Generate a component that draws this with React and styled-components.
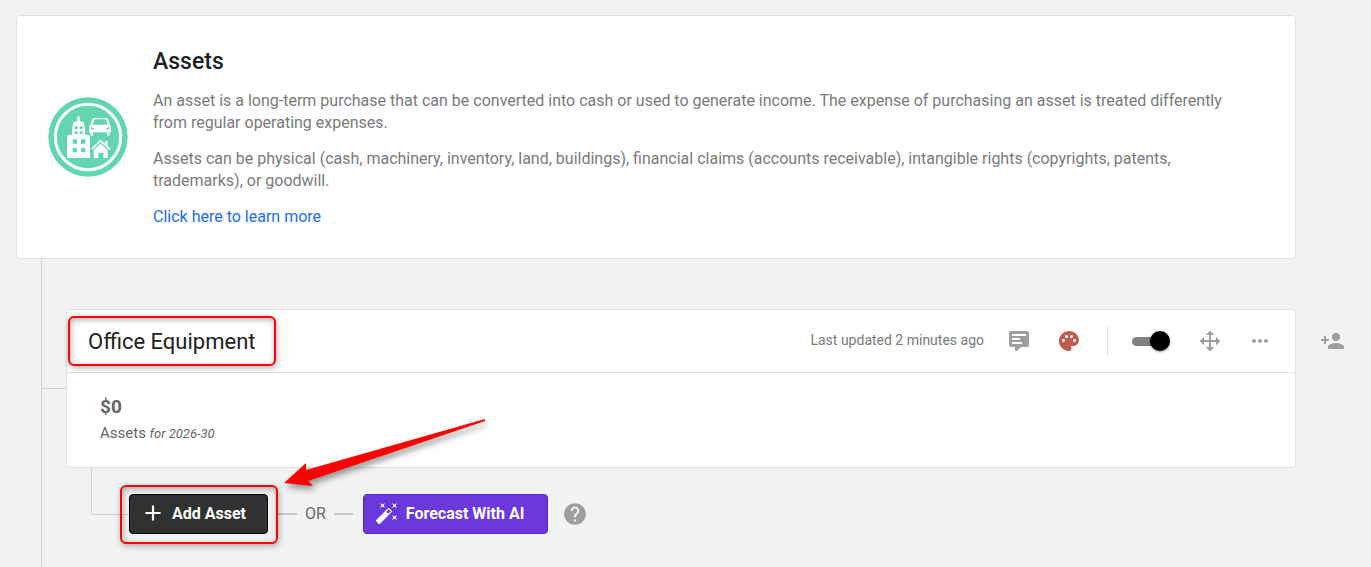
import styled, { createGlobalStyle } from "styled-components"
import { MdAdd, MdAutoFixHigh, MdHelp, MdMoreHoriz, MdPalette } from "react-icons/md"

const GlobalStyle = createGlobalStyle`
  :root {
    --page: #f1f3f2;
    --line: #d0d3d2;
    --border: #dfe1e0;
    --muted: #7a7a7a;
    --icon: #9e9e9e;
    --mark: #ff0000;
  }
  *, *::before, *::after {
    box-sizing: border-box;
  }
  body {
    margin: 0;
    background: var(--page);
    font-family: Roboto, "Liberation Sans", sans-serif;
    font-size: 16px;
    line-height: 22px;
    color: #212121;
  }
  h1, h2, p {
    margin: 0;
  }
`

const Page = styled.main`
  min-height: 100vh;
  display: flex;
  flex-direction: column;
  padding: 15px 0 0 16px;
`

const Card = styled.section`
  background: #fff;
  border: 1px solid var(--border);
  border-radius: 4px;
`

const IntroCard = styled(Card)`
  display: flex;
  align-items: center;
  gap: 25px;
  margin-right: 75px;
  padding: 32px 40px 30px 31px;
  svg {
    flex: none;
    margin-bottom: 2px;
  }
`

const IntroText = styled.div`
  display: flex;
  flex-direction: column;
  align-items: flex-start;
  gap: 14px;
  color: var(--muted);
  h1 {
    font-size: 23px;
    font-weight: 500;
    line-height: 28px;
    color: #212121;
  }
  a {
    color: #1a6fe8;
    text-decoration: none;
  }
`

const Tree = styled.div`
  flex: 1;
  margin-left: 25px;
  padding: 50px 0 30px;
  border-left: 1px solid var(--line);
`

const Branch = styled.div`
  display: flex;
`

const Stub = styled.span`
  flex: none;
  align-self: center;
  width: 24px;
  height: 1px;
  background: var(--line);
`

const CategoryCard = styled(Card)`
  flex: 1;
`

const CategoryHeader = styled.header`
  display: flex;
  align-items: center;
  justify-content: space-between;
  height: 63px;
  padding: 0 23px 0 21px;
  border-bottom: 1px solid var(--border);
  h2 {
    padding-top: 2px;
    font-size: 22px;
    font-weight: 400;
    line-height: 28px;
  }
`

const Marked = styled.div`
  position: relative;
  display: flex;
  &::after {
    content: "";
    position: absolute;
    inset: ${({ $inset }) => $inset};
    border: 2px solid var(--mark);
    border-radius: 6px;
    box-shadow: 1px 2px 6px rgba(0, 0, 0, 0.3), inset 1px 2px 6px rgba(0, 0, 0, 0.3);
    pointer-events: none;
  }
`

const HeaderSide = styled.div`
  display: flex;
  align-items: center;
  gap: 23px;
`

const Updated = styled.span`
  padding-bottom: 2px;
  font-size: 14px;
  color: var(--muted);
`

const Tools = styled.div`
  display: flex;
  align-items: center;
  gap: 26px;
`

const IconButton = styled.button`
  display: flex;
  align-items: center;
  height: 24px;
  padding: 0;
  border: 0;
  background: none;
  color: ${({ $color }) => $color || "var(--icon)"};
  cursor: pointer;
`

const Divider = styled.span`
  width: 1px;
  height: 30px;
  background: var(--border);
`

const Toggle = styled.input`
  appearance: none;
  position: relative;
  width: 38px;
  height: 20px;
  margin: 0 2px 0 -2px;
  cursor: pointer;
  &::before {
    content: "";
    position: absolute;
    inset: 6px 4px 5px 0;
    border-radius: 5px;
    background: #808080;
  }
  &::after {
    content: "";
    position: absolute;
    top: 0;
    left: 0;
    width: 20px;
    height: 20px;
    border-radius: 50%;
    background: #757575;
    box-shadow: 0 1px 3px rgba(0, 0, 0, 0.4);
  }
  &:checked::after {
    left: 18px;
    background: #000;
  }
`

const CategoryBody = styled.div`
  padding: 21px 33px;
  color: #666;
`

const Amount = styled.p`
  margin-bottom: 1px;
  font-size: 19px;
  font-weight: 700;
  line-height: 26px;
`

const Caption = styled.p`
  font-size: 15px;
  line-height: 24px;
  em {
    font-size: 13px;
  }
`

const Side = styled.div`
  flex: none;
  display: flex;
  align-items: flex-start;
  justify-content: center;
  width: 75px;
  padding: 20px 2px 0 0;
`

const Actions = styled.div`
  display: flex;
  margin-left: 49px;
`

const Elbow = styled.span`
  width: 38px;
  height: 47px;
  border: solid var(--line);
  border-width: 0 0 1px 1px;
`

const ActionRow = styled.div`
  display: flex;
  align-items: center;
  padding-top: 26px;
`

const Button = styled.button`
  display: flex;
  align-items: center;
  gap: 6px;
  height: 40px;
  padding: 0 21px 2px 10px;
  border: 1px solid #000;
  border-radius: 4px;
  background: #303231;
  color: #fff;
  font: 700 16px Roboto, "Liberation Sans", sans-serif;
  cursor: pointer;
`

const AiButton = styled(Button)`
  gap: 7px;
  padding: 0 23px 2px 11px;
  border-color: #5a22d0;
  background: #6b38db;
`

const Or = styled.div`
  display: flex;
  align-items: center;
  gap: 8px;
  margin: 0 10px;
  color: #666;
  &::before, &::after {
    content: "";
    width: 19px;
    height: 2px;
    background: #c6c9c8;
  }
`

const HelpButton = styled(IconButton)`
  margin-left: 14px;
`

const Arrow = styled.svg`
  position: absolute;
  left: 155px;
  top: -75px;
  overflow: visible;
  pointer-events: none;
  filter: drop-shadow(2px 4px 3px rgba(0, 0, 0, 0.4));
`

const AssetsLogo = () => (
  <svg width="80" height="80" viewBox="0 0 240 240" aria-hidden="true">
    <circle cx="120" cy="120" r="119" fill="#61d6b0" />
    <circle cx="120" cy="120" r="98" fill="none" stroke="#fff" strokeWidth="9" />
    <g fill="#fff">
      <path
        fillRule="evenodd"
        d="M57 183v-65l5-5h10V88h3V77l8-4h5V58h7v15h5l8 4v11h3v25h10l5 5v65zM80 88v8h9v-8zM95 88v8h9v-8zM80 103v8h9v-8zM95 103v8h9v-8zM74 127v13h13v-13zM99 127v13h13v-13zM74 153v13h13v-13zM99 153v13h13v-13z"
      />
      <path
        fillRule="evenodd"
        d="M127 84l6-17q2-4 7-4h33q5 0 7 4l6 17q3 3 3 8v14h-4v8q0 3-4 3t-4-3v-8h-42v8q0 3-4 3t-4-3v-8h-4V92q0-5 4-8zM134 83h45l-4-13q-1-3-4-3h-29q-3 0-4 3zM129 90v5l9 3v-4zM184 90v5l-9 3v-4z"
      />
      <path d="M130 154l28-26 13 12v-8h8v15l9 8-4 4-26-24-25 23z" />
      <path d="M137 159l21-19 21 19v24h-13v-16h-15v16h-14z" />
    </g>
  </svg>
)

const CommentIcon = () => (
  <svg width="24" height="24" viewBox="0 0 24 24" fill="currentColor">
    <path d="M9 22a1 1 0 0 1-1-1v-3H4a2 2 0 0 1-2-2V4c0-1.11.9-2 2-2h16a2 2 0 0 1 2 2v12a2 2 0 0 1-2 2h-6.1l-3.7 3.71c-.2.19-.45.29-.7.29zM5 5v2h14V5zm0 4v2h8V9zm0 4v2h10v-2z" />
  </svg>
)

const MoveIcon = () => (
  <svg width="24" height="24" viewBox="0 0 24 24" fill="currentColor">
    <path d="M13 6v5h5V7.75L22.25 12 18 16.25V13h-5v5h3.25L12 22.25 7.75 18H11v-5H6v3.25L1.75 12 6 7.75V11h5V6H7.75L12 1.75 16.25 6z" />
  </svg>
)

const AddPersonIcon = () => (
  <svg width="24" height="24" viewBox="0 0 24 24" fill="currentColor">
    <path d="M15 14c-2.67 0-8 1.33-8 4v2h16v-2c0-2.67-5.33-4-8-4M5 10V7H3v3H0v2h3v3h2v-3h3v-2m7 2a4 4 0 0 0 0-8 4 4 0 0 0 0 8" />
  </svg>
)

const Intro = () => (
  <IntroCard>
    <AssetsLogo />
    <IntroText>
      <h1>Assets</h1>
      <p>
        An asset is a long-term purchase that can be converted into cash or used to generate income.
        The expense of purchasing an asset is treated differently from regular operating expenses.
      </p>
      <p>
        Assets can be physical (cash, machinery, inventory, land, buildings), financial claims
        (accounts receivable), intangible rights (copyrights, patents, trademarks), or goodwill.
      </p>
      <a href="#learn-more">Click here to learn more</a>
    </IntroText>
  </IntroCard>
)

const Category = ({ name, updated, amount, period }) => (
  <CategoryCard>
    <CategoryHeader>
      <Marked $inset="-10px -20px -10px -20px">
        <h2>{name}</h2>
      </Marked>
      <HeaderSide>
        <Updated>{updated}</Updated>
        <Tools>
          <IconButton aria-label="Comments"><CommentIcon /></IconButton>
          <IconButton aria-label="Color" $color="#c05b50"><MdPalette size={24} /></IconButton>
          <Divider />
          <Toggle type="checkbox" aria-label="Enabled" defaultChecked />
          <IconButton aria-label="Move"><MoveIcon /></IconButton>
          <IconButton aria-label="More"><MdMoreHoriz size={24} /></IconButton>
        </Tools>
      </HeaderSide>
    </CategoryHeader>
    <CategoryBody>
      <Amount>{amount}</Amount>
      <Caption>Assets <em>for {period}</em></Caption>
    </CategoryBody>
  </CategoryCard>
)

const App = () => (
  <>
    <GlobalStyle />
    <Page>
      <Intro />
      <Tree>
        <Branch>
          <Stub />
          <Category
            name="Office Equipment"
            updated="Last updated 2 minutes ago"
            amount="$0"
            period="2026-30"
          />
          <Side>
            <IconButton aria-label="Add person"><AddPersonIcon /></IconButton>
          </Side>
        </Branch>
        <Actions>
          <Elbow />
          <ActionRow>
            <Marked $inset="-9px -10px -10px -9px">
              <Button><MdAdd size={26} />Add Asset</Button>
              <Arrow width="202" height="68" viewBox="0 0 202 68" aria-hidden="true">
                <path fill="#ff0000" d="M0 64L22 44v7L201 0v2L24 62l5 5z" />
              </Arrow>
            </Marked>
            <Or>OR</Or>
            <AiButton><MdAutoFixHigh size={24} />Forecast With AI</AiButton>
            <HelpButton aria-label="Help"><MdHelp size={26} /></HelpButton>
          </ActionRow>
        </Actions>
      </Tree>
    </Page>
  </>
)

export default App
